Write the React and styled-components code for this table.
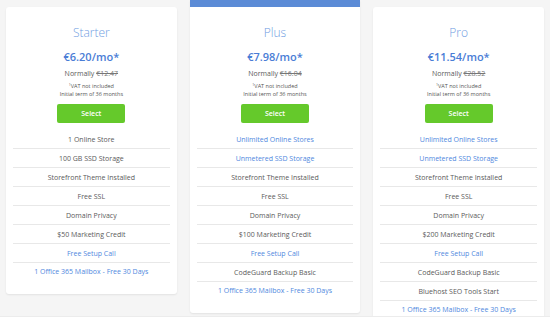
import styled, { createGlobalStyle } from "styled-components";

const GlobalStyle = createGlobalStyle`
  html, body {
    margin: 0;
    padding: 0;
    background: #ffffff;
    font-family: "Open Sans", "Liberation Sans", sans-serif;
  }
`;

const plans = [
  {
    name: "Starter",
    price: "€6.20/mo*",
    normally: "€12.47",
    features: [
      { text: "1 Online Store" },
      { text: "100 GB SSD Storage" },
      { text: "Storefront Theme Installed" },
      { text: "Free SSL" },
      { text: "Domain Privacy" },
      { text: "$50 Marketing Credit" },
      { text: "Free Setup Call", link: true },
      { text: "1 Office 365 Mailbox - Free 30 Days", link: true },
    ],
  },
  {
    name: "Plus",
    price: "€7.98/mo*",
    normally: "€16.04",
    featured: true,
    features: [
      { text: "Unlimited Online Stores", link: true },
      { text: "Unmetered SSD Storage", link: true },
      { text: "Storefront Theme Installed" },
      { text: "Free SSL" },
      { text: "Domain Privacy" },
      { text: "$100 Marketing Credit" },
      { text: "Free Setup Call", link: true },
      { text: "CodeGuard Backup Basic" },
      { text: "1 Office 365 Mailbox - Free 30 Days", link: true },
    ],
  },
  {
    name: "Pro",
    price: "€11.54/mo*",
    normally: "€28.52",
    features: [
      { text: "Unlimited Online Stores", link: true },
      { text: "Unmetered SSD Storage", link: true },
      { text: "Storefront Theme Installed" },
      { text: "Free SSL" },
      { text: "Domain Privacy" },
      { text: "$200 Marketing Credit" },
      { text: "Free Setup Call", link: true },
      { text: "CodeGuard Backup Basic" },
      { text: "Bluehost SEO Tools Start" },
      { text: "1 Office 365 Mailbox - Free 30 Days", link: true },
    ],
  },
];

const App = () => {
  return (
    <>
      <GlobalStyle />
      <Section>
        <Grid>
          {plans.map((plan) => (
            <Card key={plan.name} $featured={plan.featured}>
              <Title>{plan.name}</Title>
              <Price>{plan.price}</Price>
              <Normally>
                Normally <s>{plan.normally}</s>
              </Normally>
              <Note>
                <sup>1</sup>VAT not included
              </Note>
              <Note>Initial term of 36 months</Note>
              <SelectButton>Select</SelectButton>
              <Features>
                {plan.features.map((f) => (
                  <Feature key={f.text} $link={f.link}>
                    {f.text}
                  </Feature>
                ))}
              </Features>
            </Card>
          ))}
        </Grid>
      </Section>
      <Footer />
    </>
  );
};

const Section = styled.section`
  height: 317px;
  overflow: hidden;
  background: #f5f5f5;
  border-bottom: 1px solid #ececec;
  box-sizing: border-box;
`;

const Grid = styled.div`
  display: grid;
  grid-template-columns: repeat(3, 1fr);
  gap: 13px;
  padding: 7px 6px 0;
  align-items: start;
`;

const Card = styled.div`
  background: #ffffff;
  border-radius: 3px;
  box-shadow: 0 1px 2px rgba(0, 0, 0, 0.08);
  padding: 19px 7px 13px;
  display: flex;
  flex-direction: column;
  align-items: center;
  text-align: center;
  ${({ $featured }) =>
    $featured &&
    `
    margin-top: -7px;
    border-top: 7px solid #5b8bd6;
    border-radius: 0 0 3px 3px;
  `}
`;

const Title = styled.h2`
  margin: 0;
  font-size: 12px;
  line-height: 14px;
  font-weight: 300;
  color: #6f9de2;
`;

const Price = styled.div`
  margin-top: 10px;
  font-size: 11px;
  line-height: 13px;
  font-weight: 600;
  color: #4a7dd6;
`;

const Normally = styled.div`
  margin-top: 7px;
  margin-bottom: 3px;
  font-size: 7px;
  line-height: 8px;
  color: #5a5a5a;

  s {
    color: #777777;
  }
`;

const Note = styled.div`
  font-size: 5.5px;
  line-height: 7.5px;
  color: #555555;

  sup {
    font-size: 3.5px;
    vertical-align: 2px;
  }
`;

const SelectButton = styled.button`
  margin-top: 6px;
  width: 68px;
  height: 19px;
  border: none;
  border-radius: 2px;
  background: #65c92b;
  color: #ffffff;
  font-family: inherit;
  font-size: 7px;
  font-weight: 600;
  cursor: pointer;
`;

const Features = styled.ul`
  list-style: none;
  margin: 7px 0 0;
  padding: 0;
  align-self: stretch;
`;

const Feature = styled.li`
  height: 19px;
  line-height: 19px;
  font-size: 7px;
  color: ${({ $link }) => ($link ? "#4f88de" : "#5a5a5a")};
  border-bottom: 1px solid #e8e8e8;
  box-sizing: border-box;

  &:last-child {
    border-bottom: none;
    height: 18px;
    line-height: 18px;
  }
`;

const Footer = styled.div`
  height: 13px;
  background: #ffffff;
`;

export default App;
